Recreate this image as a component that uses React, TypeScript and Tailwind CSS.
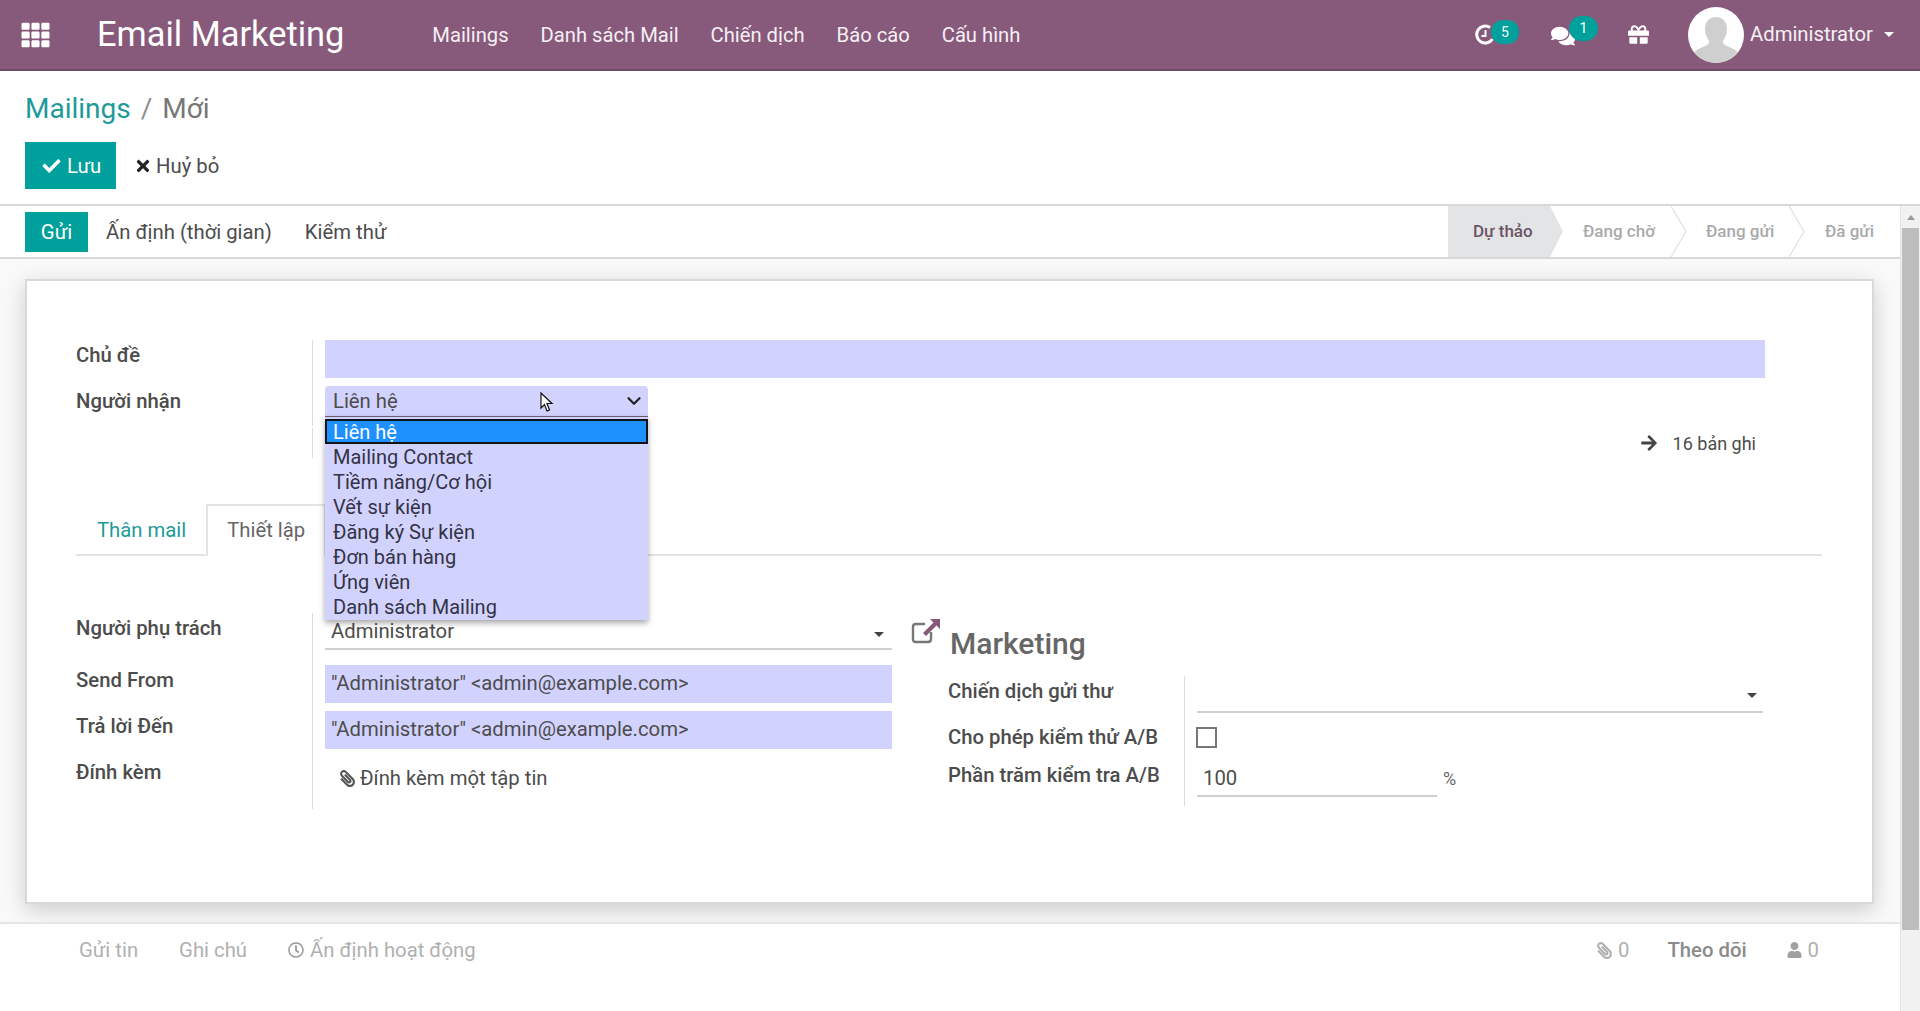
import { ChevronDown } from "lucide-react"
import { FaArrowRight, FaCheck, FaComments, FaGift, FaPaperclip, FaRegClock, FaTh, FaTimes, FaUser } from "react-icons/fa"

const options = [
  "Liên hệ",
  "Mailing Contact",
  "Tiềm năng/Cơ hội",
  "Vết sự kiện",
  "Đăng ký Sự kiện",
  "Đơn bán hàng",
  "Ứng viên",
  "Danh sách Mailing",
]

function Caret({ className }: { className: string }) {
  return <span className={`w-0 h-0 border-x-[5px] border-x-transparent border-t-[5px] ${className}`} />
}

function Label({ children }: { children: string }) {
  return <div className="w-[236px] shrink-0 text-[20.3px] leading-[30px] font-medium text-[#4c4c4c]">{children}</div>
}

function FormRow({ label, height, children }: { label: string; height: string; children: React.ReactNode }) {
  return (
    <div className={`flex ${height}`}>
      <Label>{label}</Label>
      <div className="flex-1 border-l border-[#dcdcdc] pl-[12px]">{children}</div>
    </div>
  )
}

function Header() {
  return (
    <header className="h-[71px] shrink-0 flex items-center bg-[#875a7b] border-b-2 border-[#6f4a66] text-white">
      <FaTh className="ml-[21px] w-[29px] h-[28px]" />
      <div className="ml-[47px] text-[34.4px] leading-none">Email Marketing</div>
      <nav className="ml-[88px] pt-[1px] flex gap-[32px] text-[20.2px] text-[#f6eff4]">
        <span>Mailings</span>
        <span>Danh sách Mail</span>
        <span>Chiến dịch</span>
        <span>Báo cáo</span>
        <span>Cấu hình</span>
      </nav>
      <div className="ml-auto pr-[26px] flex items-center">
        <div className="relative w-[18px] h-[20px] mt-[-2px]">
          <svg viewBox="0 0 20 22" className="w-[20px] h-[22px]" fill="none" stroke="white">
            <path d="M15 3.5 A8.5 8.5 0 1 0 17.5 15" strokeWidth="3" />
            <path d="M10.5 6 V12 H6.5" strokeWidth="2" />
          </svg>
          <span className="absolute left-[16px] top-[-4px] w-[28px] h-[24px] rounded-full bg-[#00a09d] flex items-center justify-center text-[14px] leading-none">5</span>
        </div>
        <div className="relative ml-[58px] mt-[2px]">
          <FaComments className="w-[24px] h-[22px]" />
          <span className="absolute left-[18px] top-[-9px] w-[29px] h-[25px] rounded-full bg-[#00a09d] flex items-center justify-center text-[14px] leading-none">1</span>
        </div>
        <FaGift className="ml-[53px] w-[21px] h-[21px]" />
        <div className="ml-[39px] w-[56px] h-[56px] rounded-full bg-white overflow-hidden">
          <svg viewBox="0 0 56 56" className="w-full h-full" fill="#cfcfcf">
            <path d="M28 10c7 0 11 5 11 12 0 5-2 9-4 12 0 3 2 4 6 6 5 2 9 4 10 8 1 3-4 8-23 8S4 51 5 48c1-4 5-6 10-8 4-2 6-3 6-6-2-3-4-7-4-12 0-7 4-12 11-12z" />
          </svg>
        </div>
        <span className="ml-[6px] text-[20.3px] text-[#f6eff4]">Administrator</span>
        <Caret className="ml-[11px] border-t-white" />
      </div>
    </header>
  )
}

function ControlPanel() {
  return (
    <div className="h-[135px] shrink-0 px-[25px] border-b-2 border-[#d8d8d8]">
      <div className="pt-[18px] h-[71px] text-[28px] leading-[40px]">
        <span className="text-[#1e9a98]">Mailings</span>
        <span className="mx-[10px] text-[#8f8f8f]">/</span>
        <span className="text-[#777777]">Mới</span>
      </div>
      <div className="flex items-center h-[47px] text-[20.3px]">
        <div className="w-[91px] h-full bg-[#00a09d] text-white flex items-center pl-[17px] pt-[1px] gap-[6px]">
          <FaCheck className="w-[19px] h-[18px]" />
          <span>Lưu</span>
        </div>
        <div className="ml-[19px] pt-[1px] flex items-center gap-[5px] text-[#4c4c4c]">
          <FaTimes className="w-[16px] h-[18px] text-[#222222]" />
          <span>Huỷ bỏ</span>
        </div>
      </div>
    </div>
  )
}

function StatusBar() {
  return (
    <div className="h-[53px] shrink-0 flex items-center pl-[25px] border-b-2 border-[#d8d8d8] bg-white text-[20.3px]">
      <div className="h-[40px] w-[63px] pt-[1px] bg-[#00a09d] text-white flex items-center justify-center">Gửi</div>
      <span className="ml-[18px] pt-[2px] text-[#4c4c4c]">Ấn định (thời gian)</span>
      <span className="ml-[33px] pt-[2px] text-[#4c4c4c]">Kiểm thử</span>
      <div className="ml-auto flex h-full text-[17px] font-medium text-[#aaaaaa]">
        <div className="relative w-[102px] bg-[#e3e4e6] flex items-center pl-[25px] text-[#6a5566]">
          Dự thảo
          <svg viewBox="0 0 13 50" className="absolute left-full top-0 w-[13px] h-full" preserveAspectRatio="none">
            <path d="M0 0 L13 25 L0 50 Z" fill="#e3e4e6" />
          </svg>
        </div>
        <div className="relative w-[121px] flex items-center pl-[33px]">
          Đang chờ
          <svg viewBox="0 0 16 50" className="absolute left-full top-0 w-[16px] h-full" preserveAspectRatio="none">
            <path d="M0 0 L15 25 L0 50" fill="none" stroke="#dcdcdc" />
          </svg>
        </div>
        <div className="relative w-[118px] flex items-center pl-[35px]">
          Đang gửi
          <svg viewBox="0 0 16 50" className="absolute left-full top-0 w-[16px] h-full" preserveAspectRatio="none">
            <path d="M0 0 L15 25 L0 50" fill="none" stroke="#dcdcdc" />
          </svg>
        </div>
        <div className="w-[111px] flex items-center pl-[36px]">Đã gửi</div>
      </div>
    </div>
  )
}

function RecipientSelect() {
  return (
    <div className="relative w-[323px] h-[30px] rounded-t-[4px] bg-[#d2d2ff] flex items-center pl-[8px] text-[20.3px] text-[#4c4c4c]">
      Liên hệ
      <ChevronDown className="absolute right-[3px] top-[4px] w-[22px] h-[22px] text-[#222222]" strokeWidth={2.5} />
      {/* open list lies over the tabs */}
      <div className="absolute z-10 left-0 top-[30px] w-[323px] h-[204px] pt-[2px] bg-[#d2d2ff] shadow-[0_3px_6px_rgba(0,0,0,0.35)] border-t border-[#6b5a6b] text-[20px]">
        {options.map((o, i) => (
          <div
            key={o}
            className={
              i === 0
                ? "h-[25px] pl-[6px] flex items-center bg-[#1e90ff] text-white border-2 border-[#10131a]"
                : "h-[25.1px] pl-[8px] flex items-center text-[#333344]"
            }
          >
            {o}
          </div>
        ))}
      </div>
      <svg viewBox="0 0 14 21" className="absolute z-20 left-[215px] top-[6px] w-[14px] h-[21px]">
        <path d="M1 1 L1 16 L4.5 12.5 L7 19 L9.5 18 L7 11.5 L12 11.5 Z" fill="white" stroke="#111111" strokeWidth="1.2" />
      </svg>
    </div>
  )
}

function Sheet() {
  return (
    <div className="flex-1 bg-white border-2 border-[#d9d9d9] shadow-[0_6px_20px_rgba(0,0,0,0.18)] pl-[49px] pr-[49px] pt-[59px]">
      <div className="w-[1746px]">
        <FormRow label="Chủ đề" height="h-[46px]">
          <div className="w-[1440px] h-[38px] bg-[#d2d2ff]" />
        </FormRow>
        <FormRow label="Người nhận" height="h-[40px]">
          <RecipientSelect />
        </FormRow>
        <div className="flex h-[46px]">
          <div className="w-[236px] shrink-0" />
          <div className="w-[1453px] border-l border-[#dcdcdc] pr-[9px] flex justify-end items-center h-[30px] mt-[2px] gap-[15px] text-[18px] text-[#4c4c4c]">
            <FaArrowRight className="w-[18px] h-[18px] text-[#444444]" />
            <span>16 bản ghi</span>
          </div>
        </div>

        <div className="mt-[32px] h-[52px] flex border-b-2 border-[#e4e4e4] text-[20.3px]">
          <div className="pl-[21px] pr-[20px] pt-[2px] flex items-center text-[#1e9a98]">Thân mail</div>
          <div className="w-[120px] h-[52px] pl-[19px] pb-[2px] flex items-center bg-white border-t-2 border-x-2 border-[#e4e4e4] text-[#666666]">Thiết lập</div>
        </div>

        <div className="mt-[57px] flex">
          <div className="w-[816px]">
            <FormRow label="Người phụ trách" height="h-[52px]">
              <div className="relative h-[37px] border-b-2 border-[#cfcfcf] flex items-center pl-[6px] pt-[1px] text-[20.3px] text-[#4c4c4c]">
                Administrator
                <Caret className="absolute right-[8px] top-[19px] border-t-[#444444]" />
              </div>
            </FormRow>
            <FormRow label="Send From" height="h-[46px]">
              <div className="h-[38px] pb-[2px] bg-[#d2d2ff] flex items-center pl-[6px] text-[20.3px] text-[#4c4c4c]">"Administrator" &lt;admin@example.com&gt;</div>
            </FormRow>
            <FormRow label="Trả lời Đến" height="h-[46px]">
              <div className="h-[38px] pb-[2px] bg-[#d2d2ff] flex items-center pl-[6px] text-[20.3px] text-[#4c4c4c]">"Administrator" &lt;admin@example.com&gt;</div>
            </FormRow>
            <FormRow label="Đính kèm" height="h-[52px]">
              <div className="h-[42px] flex items-center pl-[15px] pt-[1px] gap-[5px] text-[20.3px] text-[#4c4c4c]">
                <FaPaperclip className="w-[15px] h-[17px] -scale-x-100 text-[#555555]" />
                Đính kèm một tập tin
              </div>
            </FormRow>
          </div>

          <div className="ml-[19px] flex-1">
            <div className="h-[63px] flex items-start">
              <svg viewBox="0 0 30 26" className="w-[30px] h-[26px] mt-[5px]" fill="none">
                <path d="M20 14 V21 Q20 24 17 24 H5 Q2 24 2 21 V9 Q2 6 5 6 H14" stroke="#777777" strokeWidth="2.4" />
                <path d="M19 1 H29 V11 L25.5 7.5 L15 18 L12 15 L22.5 4.5 Z" fill="#875a7b" />
              </svg>
              <div className="ml-[9px] mt-[11px] text-[30px] leading-[40px] font-medium text-[#666666]">Marketing</div>
            </div>
            <div className="ml-[37px] w-[816px]">
              <FormRow label="Chiến dịch gửi thư" height="h-[46px]">
                <div className="relative w-[566px] h-[37px] border-b-2 border-[#cfcfcf]">
                  <Caret className="absolute right-[6px] top-[17px] border-t-[#444444]" />
                </div>
              </FormRow>
              <FormRow label="Cho phép kiểm thử A/B" height="h-[38px]">
                <div className="w-[21px] h-[21px] mt-[5px] ml-[-1px] border-2 border-[#777777] bg-white" />
              </FormRow>
              <FormRow label="Phần trăm kiểm tra A/B" height="h-[46px]">
                <div className="flex items-start">
                  <div className="w-[240px] h-[37px] border-b-2 border-[#cfcfcf] flex items-center pl-[6px] pt-[1px] text-[20.3px] text-[#4c4c4c]">100</div>
                  <span className="ml-[6px] mt-[5px] text-[18px] text-[#666666]">%</span>
                </div>
              </FormRow>
            </div>
          </div>
        </div>
      </div>
    </div>
  )
}

function Chatter() {
  return (
    <div className="h-[89px] shrink-0 bg-white border-t-2 border-[#e6e6e6] pl-[79px] pr-[81px] pt-[11px] flex items-start text-[20.3px] leading-[30px] text-[#b0b0b0]">
      <span>Gửi tin</span>
      <span className="ml-[41px]">Ghi chú</span>
      <span className="ml-[41px] flex items-center gap-[6px]">
        <FaRegClock className="w-[16px] h-[16px] text-[#999999]" />
        Ấn định hoạt động
      </span>
      <div className="ml-auto flex items-center">
        <FaPaperclip className="w-[15px] h-[17px] -scale-x-100" />
        <span className="ml-[6px]">0</span>
        <span className="ml-[38px] font-medium text-[#8a8a8a]">Theo dõi</span>
        <FaUser className="ml-[40px] w-[15px] h-[16px] text-[#a0a0a0]" />
        <span className="ml-[6px]">0</span>
      </div>
    </div>
  )
}

export default function App() {
  return (
    <div className="w-[1920px] h-[1011px] overflow-hidden flex flex-col bg-white [font-family:Roboto,sans-serif]">
      <Header />
      <ControlPanel />
      <div className="flex-1 flex min-h-0">
        <div className="w-[1900px] flex flex-col">
          <StatusBar />
          <div className="flex-1 flex flex-col bg-[#f9f9f9] pl-[25px] pr-[26px] pt-[20px] pb-[18px]">
            <Sheet />
          </div>
          <Chatter />
        </div>
        {/* scrollbar */}
        <div className="w-[20px] bg-[#f1f1f1] border-l border-[#e2e2e2] pl-[1px]">
          <div className="h-[22px] flex items-center justify-center">
            <span className="w-0 h-0 border-x-[4px] border-x-transparent border-b-[5px] border-b-[#999999]" />
          </div>
          <div className="w-[17px] h-[702px] bg-[#bdbdbd]" />
        </div>
      </div>
    </div>
  )
}
